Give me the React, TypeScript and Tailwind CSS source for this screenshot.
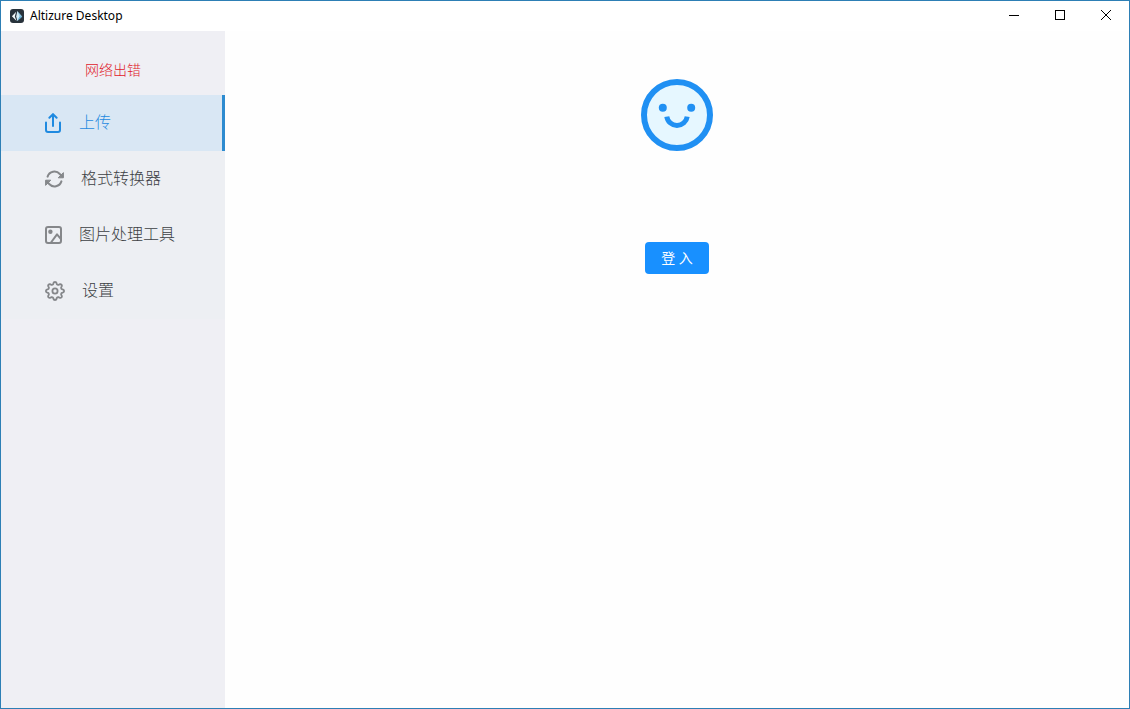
import React, { useState } from 'react';

interface MenuItem {
    id: string;
    label: string;
    icon: React.ReactNode;
}

const LogoIcon = () => (
    <svg width="14" height="14" viewBox="0 0 14 14" aria-hidden="true">
        <rect width="14" height="14" rx="3" fill="#28323b" />
        <path d="M7.4 2L12.2 7.6L7.4 12Z" fill="#8fc6e2" />
        <path d="M7.4 2L9.6 7.4L7.4 12L6.2 7.6Z" fill="#d5ecf6" />
        <path d="M6.2 2.8L1.9 7.2L6.6 12L4.8 7.4Z" fill="#f4fafc" />
        <path d="M7.4 12L9.6 7.4L12.2 7.6Z" fill="#5fa9cf" />
    </svg>
);

const UploadIcon = () => (
    <svg width="18" height="20" viewBox="0 0 18 20" fill="none" stroke="currentColor" strokeWidth="2" strokeLinecap="round" strokeLinejoin="round" aria-hidden="true">
        <path d="M1 9.5V17a2 2 0 0 0 2 2h10a2 2 0 0 0 2-2V9.5" />
        <path d="M8 13V1.5" />
        <path d="M4.4 4.8L8 1.2l3.6 3.6" />
    </svg>
);

const ConvertIcon = () => (
    <svg width="20" height="18" viewBox="0 0 20 18" fill="none" stroke="currentColor" strokeWidth="2" strokeLinecap="round" strokeLinejoin="round" aria-hidden="true">
        <path d="M2.6 6.6A7.2 7.2 0 0 1 14.8 4L17.4 6.6" />
        <path d="M16.4 11.4A7.2 7.2 0 0 1 4.2 14L1.6 11.4" />
        <path d="M18.4 3v4.8h-4.8z" fill="currentColor" strokeWidth="1" />
        <path d="M0.6 15v-4.8h4.8z" fill="currentColor" strokeWidth="1" />
    </svg>
);

const ImageIcon = () => (
    <svg width="18" height="18" viewBox="0 0 18 18" fill="none" stroke="currentColor" strokeWidth="2" strokeLinecap="round" strokeLinejoin="round" aria-hidden="true">
        <rect x="1" y="1" width="15" height="16" rx="2" />
        <circle cx="5.4" cy="5.8" r="2.2" fill="currentColor" stroke="none" />
        <path d="M6 16.5L12 8.4l4 4.8" />
    </svg>
);

// Outline of the cog: eight rounded teeth around a circle
const cogPoints = Array.from({ length: 96 }, (_, i) => {
    const angle = (i / 96) * Math.PI * 2;
    const r = 7.9 + 1.2 * Math.tanh(1.6 * Math.cos(angle * 8));
    return `${(10 + r * Math.cos(angle)).toFixed(2)},${(10 + r * Math.sin(angle)).toFixed(2)}`;
}).join(' ');

const SettingsIcon = () => (
    <svg width="21" height="20" viewBox="0 0 21 20" fill="none" stroke="currentColor" strokeWidth="1.8" strokeLinejoin="round" aria-hidden="true">
        <polygon points={cogPoints} />
        <circle cx="10" cy="10" r="2.6" />
    </svg>
);

const SmileIcon = () => (
    <svg width="72" height="72" viewBox="0 0 72 72" fill="none" aria-hidden="true">
        <circle cx="36" cy="36" r="33" fill="#e6f7ff" stroke="#2090f3" strokeWidth="6" />
        <circle cx="21.8" cy="28.7" r="4" fill="#2090f3" />
        <circle cx="50.2" cy="28.7" r="4" fill="#2090f3" />
        <path d="M25.8 37.6a10.3 10.3 0 0 0 20.4 0" stroke="#2090f3" strokeWidth="5" />
    </svg>
);

const menuItems: MenuItem[] = [
    { id: 'upload', label: '上传', icon: <UploadIcon /> },
    { id: 'convert', label: '格式转换器', icon: <ConvertIcon /> },
    { id: 'image', label: '图片处理工具', icon: <ImageIcon /> },
    { id: 'settings', label: '设置', icon: <SettingsIcon /> },
];

const TitleBar = () => (
    <header className="flex h-[30px] items-center justify-between bg-white">
        <div className="flex items-center gap-1.5 pl-[9px]">
            <LogoIcon />
            <h1 className="text-[12px] leading-4 text-black">Altizure Desktop</h1>
        </div>
        <div className="flex self-stretch pb-0.5">
            <button aria-label="Minimize" className="flex w-[46px] items-center justify-center">
                <svg width="10" height="10" viewBox="0 0 10 10" stroke="#000"><path d="M0 5.5h10" /></svg>
            </button>
            <button aria-label="Maximize" className="flex w-[46px] items-center justify-center">
                <svg width="10" height="10" viewBox="0 0 10 10" fill="none" stroke="#000"><rect x="0.5" y="0.5" width="9" height="9" /></svg>
            </button>
            <button aria-label="Close" className="flex w-[46px] items-center justify-center">
                <svg width="10" height="10" viewBox="0 0 10 10" stroke="#000"><path d="M0 0l10 10M10 0L0 10" /></svg>
            </button>
        </div>
    </header>
);

const App: React.FC = () => {
    const [active, setActive] = useState('upload');

    return (
        <div className="flex min-h-screen flex-col border border-[#2d7fb5] bg-white font-['Noto_Sans','Noto_Sans_CJK_SC',sans-serif]">
            <TitleBar />
            <div className="flex flex-1">
                <aside className="w-56 shrink-0 bg-[#efeff4]">
                    <p className="pt-[29px] pb-[15px] text-center text-sm leading-5 font-light text-[#e0202a]">网络出错</p>
                    <nav className="flex flex-col">
                        {menuItems.map((item) => (
                            <button
                                key={item.id}
                                onClick={() => setActive(item.id)}
                                className={
                                    item.id === active
                                        ? 'flex h-14 items-center gap-4 border-r-3 border-[#2d8bd0] bg-[#d9e7f4] pl-11 text-[#1f8ae0]'
                                        : 'flex h-14 items-center gap-4 bg-[#edeff3] pl-11 text-[#85878a]'
                                }
                            >
                                {item.icon}
                                <span className={item.id === active ? 'pb-0.5 text-base font-light' : 'pb-0.5 text-base font-light text-[#3c3f44]'}>{item.label}</span>
                            </button>
                        ))}
                    </nav>
                </aside>
                <main className="flex flex-1 flex-col items-center bg-[#fefefe] pt-12">
                    <SmileIcon />
                    <button className="mt-[91px] flex h-8 items-center rounded-[4px] bg-[#1890ff] px-4 text-sm text-white">
                        登 入
                    </button>
                </main>
            </div>
        </div>
    );
};

export default App;
